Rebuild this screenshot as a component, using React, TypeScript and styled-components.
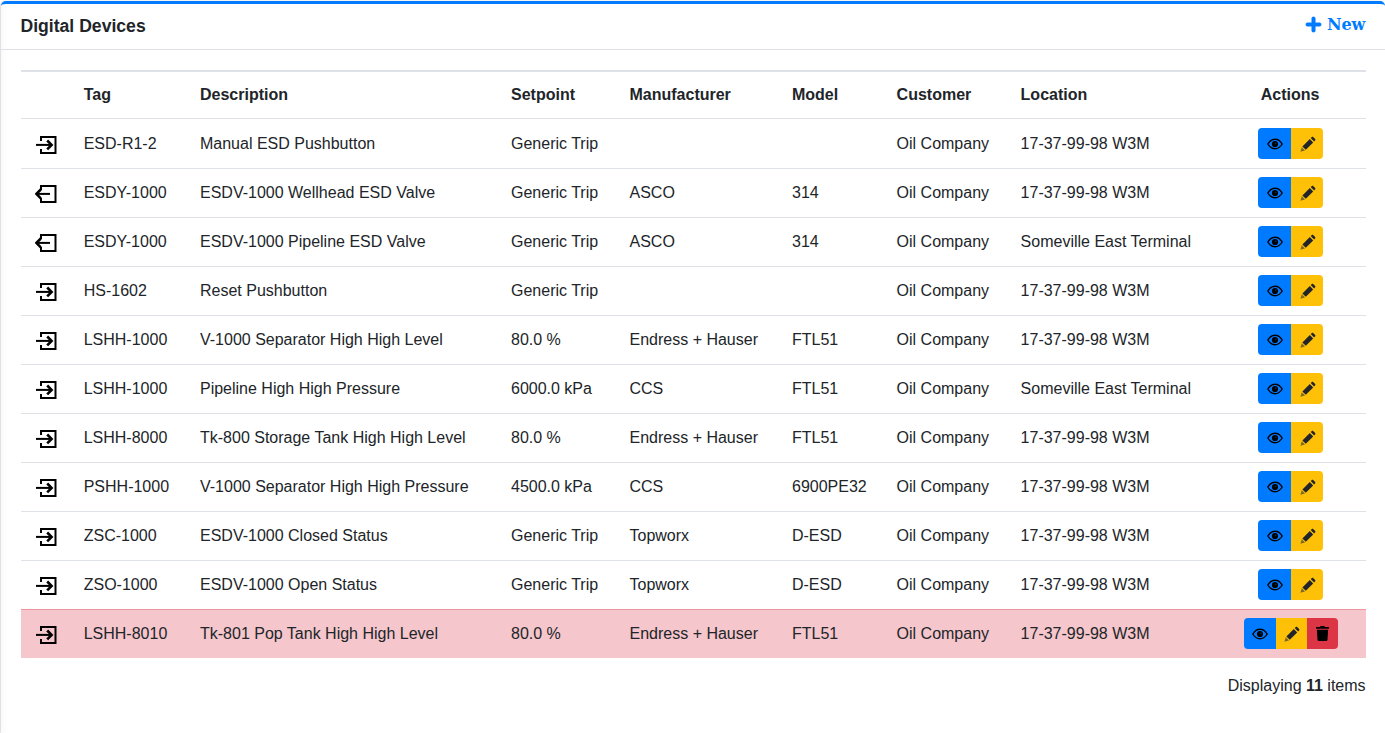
import { createGlobalStyle } from 'styled-components'
import styled from 'styled-components'
import { FaPlus, FaTrash } from 'react-icons/fa'

const GlobalStyle = createGlobalStyle`
  html, body {
    margin: 0;
    background: #fff;
    color: #212529;
    font-family: "Liberation Sans", Arial, sans-serif;
    font-size: 16px;
    line-height: 24px;
    overflow: hidden;
  }
`

const Card = styled.section`
  margin: 1px 0 0 1px;
  height: 732px;
  box-sizing: border-box;
  background: #fff;
  border-top: 3px solid #007bff;
  border-radius: 5px 5px 0 0;
  box-shadow: -1px 0 2px rgba(0, 0, 0, 0.16), inset 8px 0 8px -8px rgba(0, 0, 0, 0.05);
`

const CardHeader = styled.header`
  display: flex;
  justify-content: space-between;
  align-items: flex-start;
  height: 46px;
  box-sizing: border-box;
  padding: 10px 20px 0 19.5px;
  border-bottom: 1px solid #dee2e6;
`

const Title = styled.h1`
  margin: 0;
  font-size: 17.6px;
  line-height: 24px;
  font-weight: 700;
`

const NewLink = styled.a`
  display: flex;
  align-items: center;
  gap: 5px;
  margin-top: -1px;
  color: #007bff;
  font-family: "DejaVu Serif", "Liberation Serif", serif;
  font-size: 16px;
  font-weight: 700;
  line-height: 24px;
  letter-spacing: -0.2px;
`

const PlusIcon = styled(FaPlus)`
  margin-bottom: 2px;
  stroke: currentColor;
  stroke-width: 24;
`

const CardBody = styled.div`
  padding: 20px 19px 0 20px;
`

const Table = styled.table`
  width: 1344.6px;
  table-layout: fixed;
  border-collapse: collapse;
`

const HeadCell = styled.th<{ $center?: boolean }>`
  height: 47px;
  padding: 0 12px;
  box-sizing: border-box;
  border-top: 2px solid #dee2e6;
  border-bottom: 1px solid #dee2e6;
  text-align: ${(p) => (p.$center ? 'center' : 'left')};
  font-weight: 700;
`

const Row = styled.tr<{ $danger?: boolean }>`
  background: ${(p) => (p.$danger ? '#f5c6cb' : 'transparent')};
`

const Cell = styled.td<{ $center?: boolean }>`
  height: 49px;
  padding: 0 12px;
  box-sizing: border-box;
  border-bottom: 1px solid #dee2e6;
  text-align: ${(p) => (p.$center ? 'center' : 'left')};
  white-space: nowrap;

  ${Row}:first-child & {
    height: 50px;
    padding-top: 1px;
  }

  ${Row}:nth-last-child(2) & {
    border-bottom-color: #ed969e;
  }

  ${Row}:last-child & {
    border-bottom: 0;
  }
`

const DirectionSvg = styled.svg`
  display: block;
  margin: 3px 0 0 2px;
`

const ButtonGroup = styled.div`
  display: inline-flex;
  vertical-align: middle;
  margin-left: 1px;
  border-radius: 4px;
  overflow: hidden;
`

const ActionButton = styled.button<{ $bg: string; $w: number }>`
  display: flex;
  align-items: center;
  justify-content: center;
  width: ${(p) => p.$w}px;
  height: 31px;
  padding: 0;
  border: 0;
  background: ${(p) => p.$bg};
  color: #000;
`

const PencilSvg = styled.svg`
  margin-top: 2px;
`

function InputIcon() {
  return (
    <DirectionSvg width="24" height="24" viewBox="0 0 24 24" fill="none" stroke="#000" strokeWidth="2">
      <path d="M6 8V4h14.5v16H6v-4" />
      <path d="M1 11.9h15" />
      <path d="M12.2 7.5l4.4 4.4-4.4 4.4" strokeWidth="2.6" />
    </DirectionSvg>
  )
}

function OutputIcon() {
  return (
    <DirectionSvg width="24" height="24" viewBox="0 0 24 24" fill="none" stroke="#000" strokeWidth="2">
      <path d="M6 8V4h14.5v16H6v-4" />
      <path d="M2 11.9h13" />
      <path d="M5.8 7.5l-4.4 4.4 4.4 4.4" strokeWidth="2.6" />
    </DirectionSvg>
  )
}

function EyeIcon() {
  return (
    <svg width="16" height="12" viewBox="0 0 16 12">
      <path d="M.8 6C2.6 3 5 1.2 8 1.2S13.4 3 15.2 6C13.4 9 11 10.8 8 10.8S2.6 9 .8 6z" fill="none" stroke="#000" strokeWidth="1.4" />
      <circle cx="8" cy="6" r="3.1" fill="#000" />
      <circle cx="8.8" cy="5.2" r="0.8" fill="#00397a" />
    </svg>
  )
}

function PencilIcon() {
  return (
    <PencilSvg width="17" height="17" viewBox="0 0 17 17">
      <path d="M3.4 10.4l7.4-7.4 3.4 3.4-7.4 7.4z" fill="#212529" />
      <path d="M11.7 2.1l.9-.9c.5-.5 1.3-.5 1.8 0l1.6 1.6c.5.5.5 1.3 0 1.8l-.9.9z" fill="#212529" />
      <path d="M2.8 11.2l3.2 3.2L1.4 15.8z" fill="#7d6a24" />
    </PencilSvg>
  )
}

const Footer = styled.p`
  margin: 16px 0 0;
  width: 1344.6px;
  text-align: right;
`

const rows = [
  ['in', 'ESD-R1-2', 'Manual ESD Pushbutton', 'Generic Trip', '', '', '17-37-99-98 W3M'],
  ['out', 'ESDY-1000', 'ESDV-1000 Wellhead ESD Valve', 'Generic Trip', 'ASCO', '314', '17-37-99-98 W3M'],
  ['out', 'ESDY-1000', 'ESDV-1000 Pipeline ESD Valve', 'Generic Trip', 'ASCO', '314', 'Someville East Terminal'],
  ['in', 'HS-1602', 'Reset Pushbutton', 'Generic Trip', '', '', '17-37-99-98 W3M'],
  ['in', 'LSHH-1000', 'V-1000 Separator High High Level', '80.0 %', 'Endress + Hauser', 'FTL51', '17-37-99-98 W3M'],
  ['in', 'LSHH-1000', 'Pipeline High High Pressure', '6000.0 kPa', 'CCS', 'FTL51', 'Someville East Terminal'],
  ['in', 'LSHH-8000', 'Tk-800 Storage Tank High High Level', '80.0 %', 'Endress + Hauser', 'FTL51', '17-37-99-98 W3M'],
  ['in', 'PSHH-1000', 'V-1000 Separator High High Pressure', '4500.0 kPa', 'CCS', '6900PE32', '17-37-99-98 W3M'],
  ['in', 'ZSC-1000', 'ESDV-1000 Closed Status', 'Generic Trip', 'Topworx', 'D-ESD', '17-37-99-98 W3M'],
  ['in', 'ZSO-1000', 'ESDV-1000 Open Status', 'Generic Trip', 'Topworx', 'D-ESD', '17-37-99-98 W3M'],
  ['in', 'LSHH-8010', 'Tk-801 Pop Tank High High Level', '80.0 %', 'Endress + Hauser', 'FTL51', '17-37-99-98 W3M'],
]

const widths = [50.7, 116.3, 311, 118.5, 162.5, 104.6, 124, 206, 151]
const heads = ['', 'Tag', 'Description', 'Setpoint', 'Manufacturer', 'Model', 'Customer', 'Location']

export default function App() {
  return (
    <>
      <GlobalStyle />
      <Card>
        <CardHeader>
          <Title>Digital Devices</Title>
          <NewLink>
            <PlusIcon size={17} />
            New
          </NewLink>
        </CardHeader>
        <CardBody>
          <Table>
            <colgroup>
              {widths.map((w, i) => (
                <col key={i} width={w} />
              ))}
            </colgroup>
            <thead>
              <tr>
                {heads.map((h, i) => (
                  <HeadCell key={i}>{h}</HeadCell>
                ))}
                <HeadCell $center>Actions</HeadCell>
              </tr>
            </thead>
            <tbody>
              {rows.map((r, i) => {
                const danger = i === rows.length - 1
                return (
                  <Row key={i} $danger={danger}>
                    <Cell>{r[0] === 'in' ? <InputIcon /> : <OutputIcon />}</Cell>
                    <Cell>{r[1]}</Cell>
                    <Cell>{r[2]}</Cell>
                    <Cell>{r[3]}</Cell>
                    <Cell>{r[4]}</Cell>
                    <Cell>{r[5]}</Cell>
                    <Cell>Oil Company</Cell>
                    <Cell>{r[6]}</Cell>
                    <Cell $center>
                      <ButtonGroup>
                        <ActionButton $bg="#007bff" $w={danger ? 32 : 33}>
                          <EyeIcon />
                        </ActionButton>
                        <ActionButton $bg="#ffc107" $w={danger ? 31 : 32}>
                          <PencilIcon />
                        </ActionButton>
                        {danger && (
                          <ActionButton $bg="#dc3545" $w={31}>
                            <FaTrash size={15} />
                          </ActionButton>
                        )}
                      </ButtonGroup>
                    </Cell>
                  </Row>
                )
              })}
            </tbody>
          </Table>
          <Footer>
            Displaying <b>11</b> items
          </Footer>
        </CardBody>
      </Card>
    </>
  )
}
